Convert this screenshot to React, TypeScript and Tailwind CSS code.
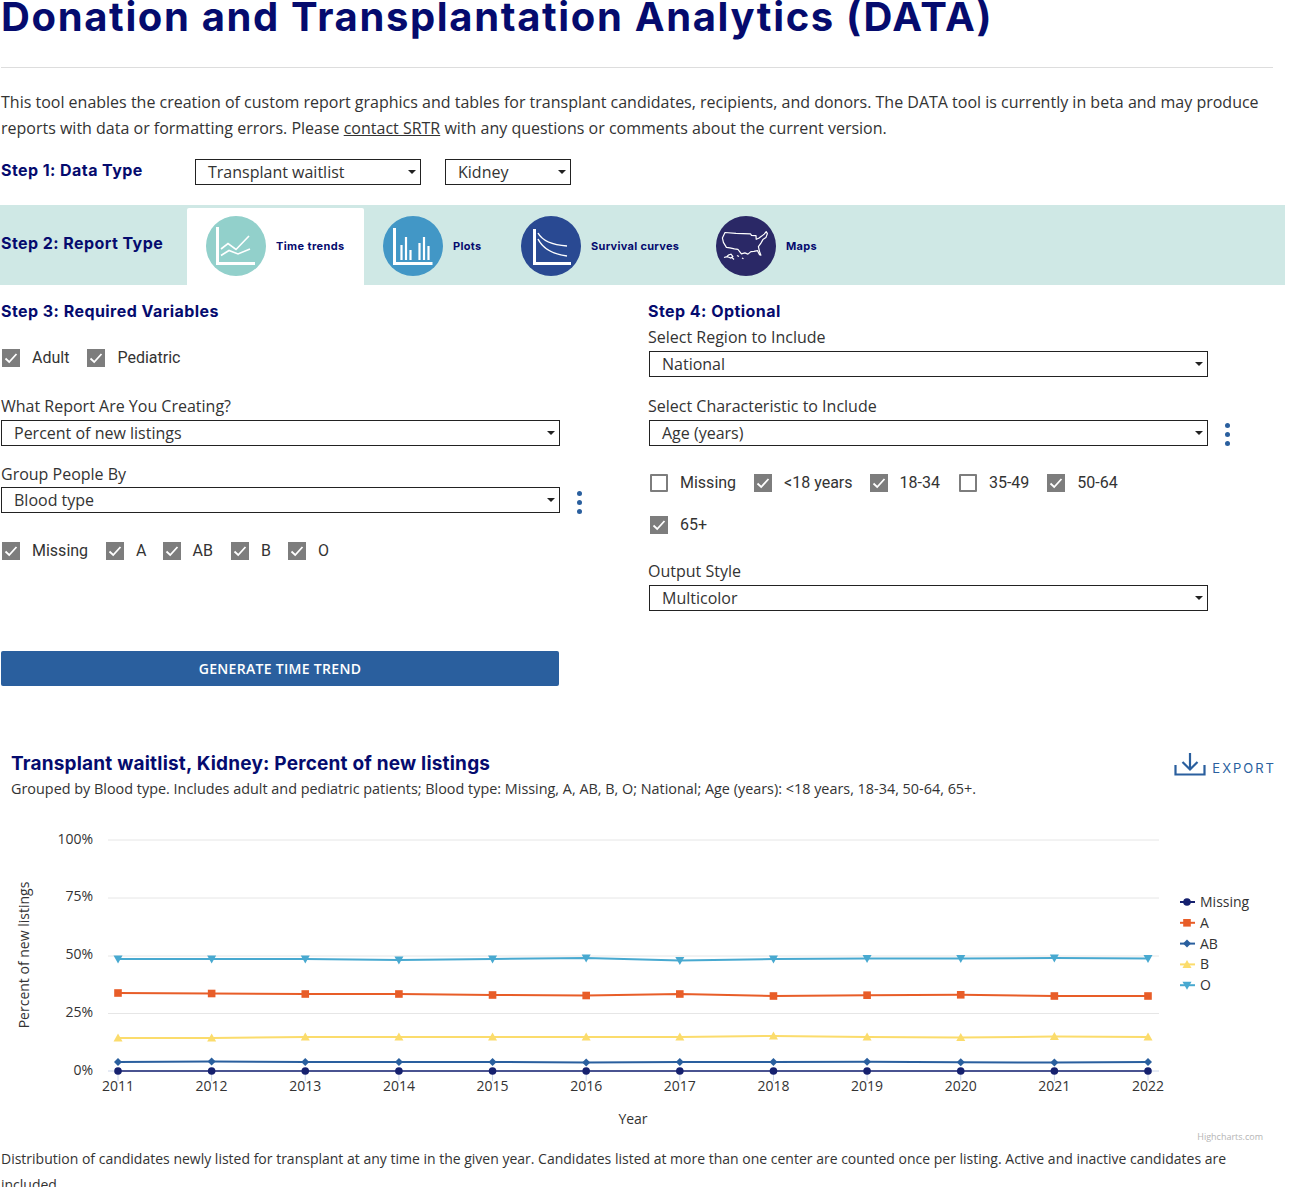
import React from 'react';

const heading = "font-['Inter','Liberation_Sans',sans-serif] font-bold text-[#050b6e]";

const Select = ({ label, w }: { label: string; w: string }) => (
  <div className={`${w} h-[26px] border border-[#222] flex items-center justify-between pl-3 pr-[4px] text-[16px] leading-none text-[#333] bg-white`}>
    <span>{label}</span>
    <span className="border-x-[4px] border-x-transparent border-t-[4px] border-t-[#222]" />
  </div>
);

const Check = ({ label, on = true, gap }: { label: string; on?: boolean; gap: string }) => (
  <div className={`flex items-center gap-3 ${gap}`}>
    {on ? (
      <svg width="18" height="18" viewBox="0 0 18 18" className="shrink-0">
        <rect width="18" height="18" fill="#7d7d7d" />
        <path d="M3.5 9.5 7.2 13l7.3-8" fill="none" stroke="#fff" strokeWidth="1.8" />
      </svg>
    ) : (
      <span className="w-[18px] h-[18px] shrink-0 border-2 border-[#7d7d7d] rounded-[1px]" />
    )}
    <span className="font-['Roboto',sans-serif] text-[16px] text-[#333]">{label}</span>
  </div>
);

const Dots = () => (
  <div className="flex flex-col gap-[4px]">
    <span className="w-[5px] h-[5px] rounded-full bg-[#2a5f9e]" />
    <span className="w-[5px] h-[5px] rounded-full bg-[#2a5f9e]" />
    <span className="w-[5px] h-[5px] rounded-full bg-[#2a5f9e]" />
  </div>
);

const TrendIcon = () => (
  <svg width="60" height="60" viewBox="0 0 60 60" className="shrink-0">
    <circle cx="30" cy="30" r="30" fill="#92d0cb" />
    <path d="M11.5 11v36.5H49" fill="none" stroke="#fff" strokeWidth="3" />
    <path d="M15 33l7-5.5 8 6L43 20M15 39.5l8-5 9 3.500 12-5" fill="none" stroke="#fff" strokeWidth="1.600" />
  </svg>
);

const PlotIcon = () => (
  <svg width="60" height="60" viewBox="0 0 60 60" className="shrink-0">
    <circle cx="30" cy="30" r="30" fill="#4297c6" />
    <path d="M11.500 12v35.500H49.500" fill="none" stroke="#fff" strokeWidth="3" />
    <path d="M18.500 29v15M23 21v23M27.500 34v10M36.500 27v17M41 21v23M45.500 30v14" fill="none" stroke="#fff" strokeWidth="2.200" />
  </svg>
);

const SurvivalIcon = () => (
  <svg width="60" height="60" viewBox="0 0 60 60" className="shrink-0">
    <circle cx="30" cy="30" r="30" fill="#294992" />
    <path d="M13.500 13v34.500H50" fill="none" stroke="#fff" strokeWidth="3" />
    <path d="M17 17c5 9 15 12 29 13M17 23c5 10 14 15 29 17" fill="none" stroke="#fff" strokeWidth="1.500" />
  </svg>
);

const MapIcon = () => (
  <svg width="60" height="60" viewBox="0 0 60 60" className="shrink-0">
    <circle cx="30" cy="30" r="30" fill="#2a2866" />
    <path d="M9 16.500l11 .8 14.500.5 1 1.500 4.500.3.200 3.700 2.500-1 3-2.200 2.500-2 2-2.500 1.200 2-1.500 4-3 2-2 3.500-2.500 3.500 1 4.500 1.500 4-1.500-.5-2-4-3.500.8-3 .2-3 2.500-3-1.200-3.500 1-3.500-4.500-3.500-.5-4.500-1-3.500-.5-3-5-1-4.500z" fill="none" stroke="#fff" strokeWidth="1.200" strokeLinejoin="round" />
    <path d="M8 41.500l3-1 1.500-1.500 2.500-.8 1.800 2.300-2 1.500-2-.8-1.800-.500zM15.500 41l2.500 2.500M21 39.500l2 1M26 42l1.500.8" fill="none" stroke="#fff" strokeWidth="1.200" />
  </svg>
);

const years = [2011, 2012, 2013, 2014, 2015, 2016, 2017, 2018, 2019, 2020, 2021, 2022];
const xAt = (i: number) => 118 + (i * (1148 - 118)) / 11;

const series = [
  { name: 'Missing', color: '#16216f', width: 1.4, ys: [1071, 1071, 1071, 1071, 1071, 1071, 1071, 1071, 1071, 1071, 1071, 1071] },
  { name: 'A', color: '#e85d28', width: 2, ys: [993, 993.5, 994, 994, 995, 995.5, 994, 996, 995.2, 994.8, 996, 996] },
  { name: 'AB', color: '#2a5f9e', width: 2, ys: [1062, 1061.5, 1062, 1062, 1062, 1062.5, 1062, 1062, 1061.8, 1062.3, 1062.5, 1062] },
  { name: 'B', color: '#fbdc6c', width: 2, ys: [1038, 1038, 1037, 1037, 1037, 1037, 1037, 1036, 1037, 1037.5, 1036.5, 1037] },
  { name: 'O', color: '#48a9d0', width: 2, ys: [959, 959, 959, 960, 959, 958, 960.500, 959, 958.500, 958.500, 958, 958.500] },
];

const Marker = ({ name, x, y, color }: { name: string; x: number; y: number; color: string }) => {
  if (name === 'Missing') return <circle cx={x} cy={y} r="3.800" fill={color} />;
  if (name === 'A') return <rect x={x - 3.800} y={y - 3.800} width="7.600" height="7.600" fill={color} />;
  if (name === 'AB') return <path d={`M${x} ${y - 4}l4 4-4 4-4-4z`} fill={color} />;
  if (name === 'B') return <path d={`M${x} ${y - 4.500}l4.500 8h-9z`} fill={color} />;
  return <path d={`M${x - 4.500} ${y - 3.500}h9l-4.500 8z`} fill={color} />;
};

const Chart = () => (
  <svg width="1293" height="335" viewBox="0 810 1293 335" className="block font-['Open_Sans',sans-serif]">
    {[840, 898, 956, 1013.500].map((y) => (
      <line key={y} x1="108" x2="1159" y1={y} y2={y} stroke="#e6e6e6" />
    ))}
    <line x1="108" x2="1159" y1="1071" y2="1071" stroke="#ccd6eb" />
    {years.map((yr, i) => (
      <g key={yr}>
        <line x1={xAt(i)} x2={xAt(i)} y1="1071" y2="1081" stroke="#ccd6eb" />
        <text x={xAt(i)} y="1091" textAnchor="middle" fontSize="14" fill="#333">{yr}</text>
      </g>
    ))}
    {[['100%', 844], ['75%', 901], ['50%', 959], ['25%', 1017], ['0%', 1075]].map(([t, y]) => (
      <text key={t} x="93" y={y} textAnchor="end" fontSize="14" fill="#333">{t}</text>
    ))}
    <text x="0" y="0" transform="translate(29 955) rotate(-90)" textAnchor="middle" fontSize="14" fill="#333">Percent of new listings</text>
    <text x="633" y="1124" textAnchor="middle" fontSize="14" fill="#333">Year</text>
    {series.map((s) => (
      <g key={s.name}>
        <polyline points={s.ys.map((y, i) => `${xAt(i)},${y}`).join(' ')} fill="none" stroke={s.color} strokeWidth={s.width} />
        {s.ys.map((y, i) => (
          <Marker key={i} name={s.name} x={xAt(i)} y={y} color={s.color} />
        ))}
      </g>
    ))}
    {series.map((s, i) => {
      const y = 902 + i * 20.800;
      return (
        <g key={s.name}>
          <line x1="1180" x2="1195" y1={y} y2={y} stroke={s.color} strokeWidth="2" />
          <Marker name={s.name} x={1187} y={y} color={s.color} />
          <text x="1200" y={y + 5} fontSize="14" fill="#333">{s.name}</text>
        </g>
      );
    })}
    <text x="1263" y="1140" textAnchor="end" fontSize="9" fill="#b5b5b5">Highcharts.com</text>
  </svg>
);

const ExportIcon = () => (
  <svg width="32" height="23" viewBox="0 0 32 23">
    <path d="M1.500 12v9.500h29V12" fill="none" stroke="#2a5f9e" strokeWidth="2.200" />
    <path d="M16 0v16M8.500 9l7.500 7.500L23.500 9" fill="none" stroke="#2a5f9e" strokeWidth="2.200" />
  </svg>
);

const tabs = [
  { label: 'Plots', icon: <PlotIcon />, w: 'w-[138px]' },
  { label: 'Survival curves', icon: <SurvivalIcon />, w: 'w-[195px]' },
  { label: 'Maps', icon: <MapIcon />, w: 'w-[120px]' },
];

export default function App() {
  return (
    <div className="w-[1293px] h-[1187px] overflow-hidden bg-white font-['Open_Sans',sans-serif] text-[#333]">
      <div className="pl-px w-[1273px]">
        <h1 className={`${heading} text-[40px] leading-[48px] tracking-[1.64px] -mt-[7px] whitespace-nowrap`}>
          Donation and Transplantation Analytics (DATA)
        </h1>
        <div className="mt-[26px] border-t border-[#ddd]" />
        <p className="mt-[21px] text-[16px] leading-[26px] w-[1272px]">
          This tool enables the creation of custom report graphics and tables for transplant candidates, recipients, and donors. The DATA tool is currently in beta and may produce reports with data or formatting errors. Please <span className="underline">contact SRTR</span> with any questions or comments about the current version.
        </p>
      </div>

      {/* Step 1 */}
      <div className="mt-[18px] pl-px flex items-center h-[26px]">
        <h2 className={`${heading} text-[16px] tracking-[0.43px] w-[194px] -mt-[4px]`}>Step 1: Data Type</h2>
        <Select label="Transplant waitlist" w="w-[226px]" />
        <Select label="Kidney" w="w-[126px] ml-[24px]" />
      </div>

      {/* Step 2 */}
      <div className="mt-[20px] w-[1285px] h-[80px] bg-[#cfe8e5] flex items-end">
        <h2 className={`${heading} text-[16px] tracking-[0.43px] pl-px w-[187px] self-center -mt-[5px]`}>Step 2: Report Type</h2>
        <div className="w-[177px] h-[77px] bg-white rounded-t-[2px] flex items-start pt-[8px] pl-[19px] gap-[10px]">
          <TrendIcon />
          <span className={`${heading} text-[11px] tracking-[0.4px] mt-[22px]`}>Time trends</span>
        </div>
        {tabs.map((t) => (
          <div key={t.label} className={`${t.w} h-[77px] flex items-start pt-[8px] pl-[19px] gap-[10px]`}>
            {t.icon}
            <span className={`${heading} text-[11px] tracking-[0.3px] mt-[22px] whitespace-nowrap`}>{t.label}</span>
          </div>
        ))}
      </div>

      {/* Steps 3 and 4 */}
      <div className="flex">
        <div className="w-[648px] pl-px">
          <h2 className={`${heading} text-[16px] tracking-[0.45px] mt-[16px] leading-[20px]`}>Step 3: Required Variables</h2>
          <div className="mt-[25px] flex pl-px h-[24px]">
            <Check label="Adult" gap="mr-[18px]" />
            <Check label="Pediatric" gap="" />
          </div>
          <div className="mt-[24px] text-[16px] leading-[24px]">What Report Are You Creating?</div>
          <div className="mt-[2px]"><Select label="Percent of new listings" w="w-[559px]" /></div>
          <div className="mt-[16px] text-[16px] leading-[24px]">Group People By</div>
          <div className="flex items-center">
            <Select label="Blood type" w="w-[559px]" />
            <div className="ml-[17px] mt-[5px]"><Dots /></div>
          </div>
          <div className="mt-[25px] flex pl-px h-[24px]">
            <Check label="Missing" gap="mr-[18px]" />
            <Check label="A" gap="mr-[16px]" />
            <Check label="AB" gap="mr-[18px]" />
            <Check label="B" gap="mr-[17px]" />
            <Check label="O" gap="" />
          </div>
          <button className="mt-[88px] w-[558px] h-[35px] rounded-[2px] bg-[#2a5f9e] text-white text-[14px] tracking-[0.3px] font-semibold uppercase">
            Generate Time Trend
          </button>
        </div>
        <div className="w-[600px]">
          <h2 className={`${heading} text-[16px] tracking-[0.45px] mt-[16px] leading-[20px]`}>Step 4: Optional</h2>
          <div className="mt-[4px] text-[16px] leading-[24px]">Select Region to Include</div>
          <div className="mt-[2px] ml-px"><Select label="National" w="w-[559px]" /></div>
          <div className="mt-[17px] text-[16px] leading-[24px]">Select Characteristic to Include</div>
          <div className="mt-[2px] ml-px flex items-center">
            <Select label="Age (years)" w="w-[559px]" />
            <div className="ml-[17px] mt-[2px]"><Dots /></div>
          </div>
          <div className="mt-[25px] ml-[2px] flex h-[24px]">
            <Check label="Missing" on={false} gap="mr-[18px]" />
            <Check label="<18 years" gap="mr-[17px]" />
            <Check label="18-34" gap="mr-[19px]" />
            <Check label="35-49" on={false} gap="mr-[18px]" />
            <Check label="50-64" gap="" />
          </div>
          <div className="mt-[18px] ml-[2px] flex h-[24px]">
            <Check label="65+" gap="" />
          </div>
          <div className="mt-[22px] text-[16px] leading-[24px]">Output Style</div>
          <div className="mt-[2px] ml-px"><Select label="Multicolor" w="w-[559px]" /></div>
        </div>
      </div>

      {/* Chart */}
      <div className="mt-[64px] pl-[11px] pr-[17px] flex justify-between items-start">
        <div>
          <h2 className={`${heading} text-[19px] tracking-[0.2px] leading-[25px] mt-[1px]`}>Transplant waitlist, Kidney: Percent of new listings</h2>
          <p className="text-[14.4px] leading-[26px]">Grouped by Blood type. Includes adult and pediatric patients; Blood type: Missing, A, AB, B, O; National; Age (years): &lt;18 years, 18-34, 50-64, 65+.</p>
        </div>
        <div className="flex items-end gap-[6px] mt-[3px]">
          <ExportIcon />
          <span className="font-['Inter',sans-serif] text-[13px] leading-[16px] tracking-[2px] text-[#2a5f9e]">EXPORT</span>
        </div>
      </div>
      <div className="mt-[8px]"><Chart /></div>
      <p className="mt-[1px] pl-px text-[14px] leading-[26px] w-[1285px]">
        Distribution of candidates newly listed for transplant at any time in the given year. Candidates listed at more than one center are counted once per listing. Active and inactive candidates are included.
      </p>
    </div>
  );
}
